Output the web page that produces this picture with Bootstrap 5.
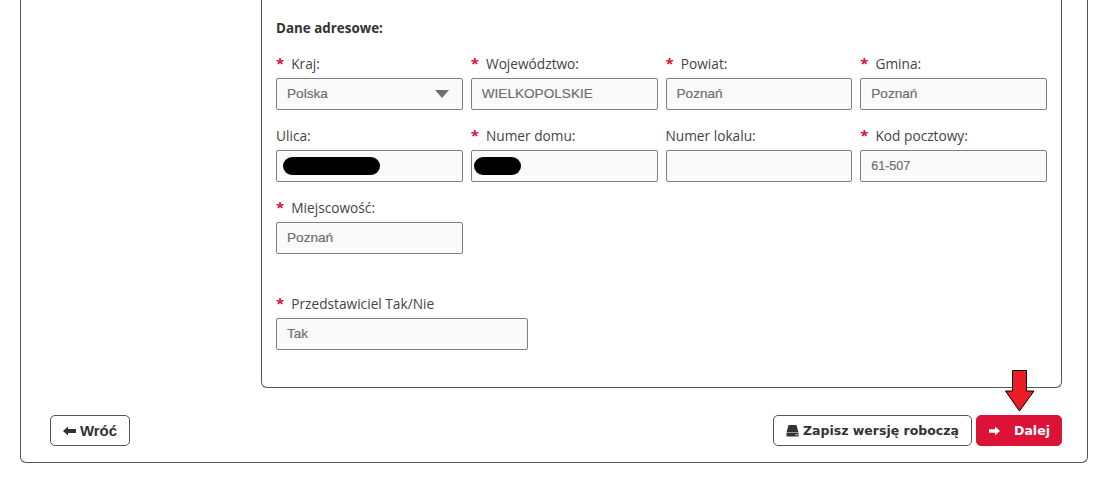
<!DOCTYPE html>
<html lang="pl">
<head>
<meta charset="utf-8">
<title>Dane adresowe</title>
<link href="https://cdn.jsdelivr.net/npm/bootstrap@5.3.0/dist/css/bootstrap.min.css" rel="stylesheet">
<style>
html, body { height: 498px; overflow: hidden; background: #fff; }
body { font-family: "Open Sans", "Liberation Sans", sans-serif; font-size: 13px; color: #333; position: relative; }
.outer-box { margin: 0 32px 0 20px; height: 463px; border: 1px solid #555; border-top: 0; border-radius: 0 0 6px 6px; padding: 0 25px 0 29px; }
.side-inner { margin-left: 211px; height: 388px; border: 1px solid #555; border-top: 0; border-radius: 0 0 6px 6px; padding: 19px 14px 0 14px; }
.sect-title { font-size: 13.4px; font-weight: 700; color: #333; line-height: 18px; margin-bottom: 19px; }
.fld-row { --bs-gutter-x: 8px; margin-bottom: 18px; height: 54px; }
.fld-label { font-size: 13.7px; line-height: 16px; margin-bottom: 6px; color: #444; display: block; white-space: nowrap; }
.req { color: #d5103a; font-size: 15px; margin-right: 3.500px; font-weight: 700; line-height: 14px; }
.fld-box { height: 32px; border: 1px solid #808080; border-radius: 2px; background: #fafafa; color: #6f6f6f; font-family: "Liberation Sans", sans-serif; font-size: 13.600px; padding: 0 10px; display: flex; align-items: center; justify-content: space-between; -webkit-text-stroke: .2px #6f6f6f; }
.fld-code { font-size: 12.500px; }
.caret-down { width: 0; height: 0; border-left: 7.5px solid transparent; border-right: 7.5px solid transparent; border-top: 8px solid #6f6f6f; margin-right: 3px; }
.redact-a { width: 97px; height: 18px; background: #000; border-radius: 9px; margin-left: -4px; }
.redact-b { width: 47px; height: 18px; background: #000; border-radius: 9px; margin-left: -8px; }
.tak-col { width: 252px; }
.spacer-row { margin-top: 42px; }
.act-bar { margin-top: 27px; height: 32px; }
.act-btn { height: 31px; padding: 0; font-weight: 700; line-height: 29px; border: 1px solid #555; border-radius: 5px; background: #fff; color: #333; display: inline-flex; align-items: center; justify-content: center; gap: 4px; font-family: "DejaVu Sans", sans-serif; font-size: 12.5px; }
.act-back { font-family: "Liberation Sans", sans-serif; font-size: 15px; width: 80px; }
.act-save { width: 199px; }
.act-next { width: 86px; background: #dc1237; border-color: #dc1237; color: #fff; gap: 14px; margin-left: 4px; padding-left: 1px; }
.red-arrow { position: absolute; left: 1005px; top: 370px; }
</style>
</head>
<body>
<div class="outer-box">
  <div class="side-inner">
    <div class="sect-title">Dane adresowe:</div>
    <div class="row fld-row">
      <div class="col-3"><label class="fld-label"><span class="req">*</span> Kraj:</label><div class="fld-box">Polska<span class="caret-down"></span></div></div>
      <div class="col-3"><label class="fld-label"><span class="req">*</span> Województwo:</label><div class="fld-box">WIELKOPOLSKIE</div></div>
      <div class="col-3"><label class="fld-label"><span class="req">*</span> Powiat:</label><div class="fld-box">Poznań</div></div>
      <div class="col-3"><label class="fld-label"><span class="req">*</span> Gmina:</label><div class="fld-box">Poznań</div></div>
    </div>
    <div class="row fld-row">
      <div class="col-3"><label class="fld-label">Ulica:</label><div class="fld-box justify-content-start"><span class="redact-a"></span></div></div>
      <div class="col-3"><label class="fld-label"><span class="req">*</span> Numer domu:</label><div class="fld-box justify-content-start"><span class="redact-b"></span></div></div>
      <div class="col-3"><label class="fld-label">Numer lokalu:</label><div class="fld-box"></div></div>
      <div class="col-3"><label class="fld-label"><span class="req">*</span> Kod pocztowy:</label><div class="fld-box fld-code">61-507</div></div>
    </div>
    <div class="row fld-row">
      <div class="col-3"><label class="fld-label"><span class="req">*</span> Miejscowość:</label><div class="fld-box">Poznań</div></div>
    </div>
    <div class="spacer-row tak-col">
      <label class="fld-label"><span class="req">*</span> Przedstawiciel Tak/Nie</label><div class="fld-box">Tak</div>
    </div>
  </div>
  <div class="d-flex justify-content-between act-bar">
    <button type="button" class="btn act-btn act-back"><svg width="13" height="10" viewBox="0 0 13 10"><path d="M0 5 5 .5V3h8v4H5v2.500z" fill="#333"/></svg>Wróć</button>
    <div class="d-flex">
      <button type="button" class="btn act-btn act-save"><svg width="13" height="13" viewBox="0 0 13 13"><path d="M2.500 1h8l2 7.500H.5z" fill="#333"/><rect x=".5" y="9" width="12" height="3.500" rx=".5" fill="#333"/><rect x="9.500" y="10.300" width="2" height="1" fill="#fff"/></svg>Zapisz wersję roboczą</button>
      <button type="button" class="btn act-btn act-next"><svg width="11" height="10" viewBox="0 0 11 10"><path d="M11 5 6 .5V3.200H0v3.600h6v2.700z" fill="#fff"/></svg>Dalej</button>
    </div>
  </div>
</div>
<svg class="red-arrow" width="30" height="42" viewBox="0 0 30 42"><path d="M7.500 .5H21.500V21H29L14.500 41 .5 21H7.500z" fill="#ed1c24" stroke="#000" stroke-width="1"/></svg>
<script src="https://cdn.jsdelivr.net/npm/bootstrap@5.3.0/dist/js/bootstrap.bundle.min.js"></script>
</body>
</html>
